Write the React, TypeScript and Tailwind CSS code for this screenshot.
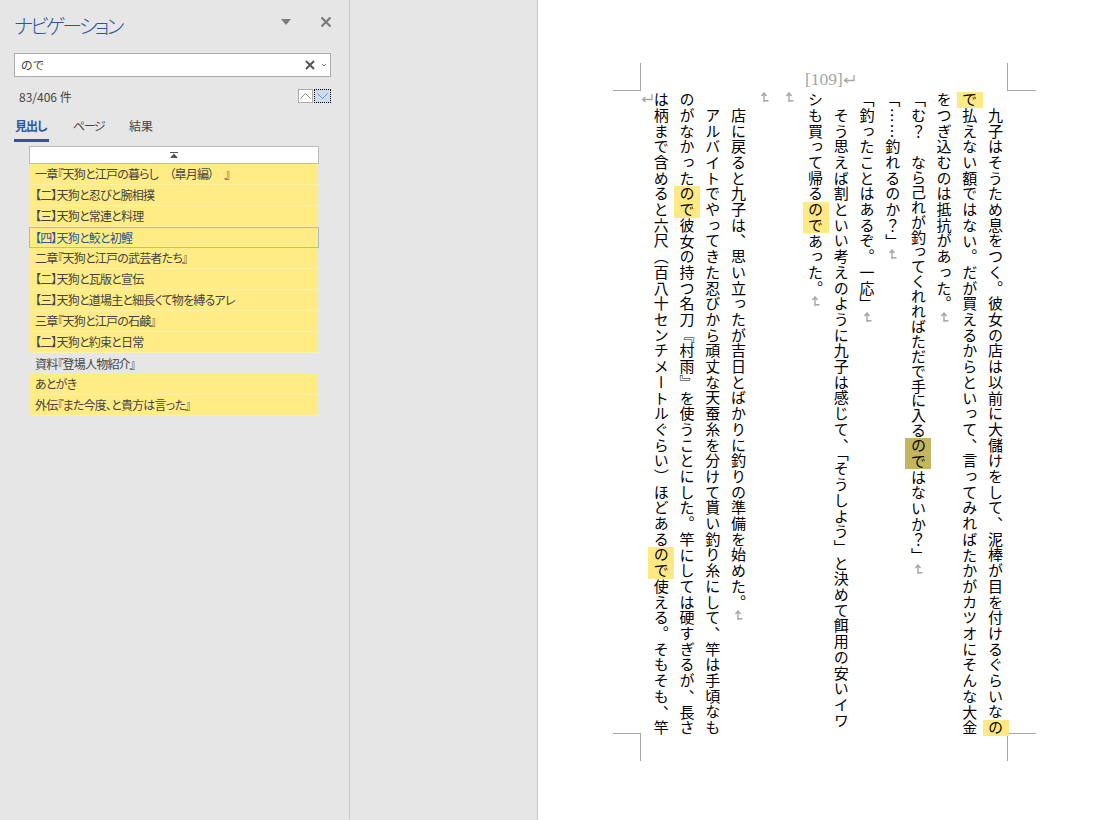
const headings = [
  { text: "一章『天狗と江戸の暮らし\u2003\uFF08皐月編\uFF09\u2003』", hit: true },
  { text: "【二】天狗と忍びと腕相撲", hit: true },
  { text: "【三】天狗と常連と料理", hit: true },
  { text: "【四】天狗と鮫と初鰹", hit: true, current: true },
  { text: "二章『天狗と江戸の武芸者たち』", hit: true },
  { text: "【二】天狗と瓦版と宣伝", hit: true },
  { text: "【三】天狗と道場主と細長くて物を縛るアレ", hit: true },
  { text: "三章『天狗と江戸の石鹸』", hit: true },
  { text: "【二】天狗と約束と日常", hit: true },
  { text: "資料『登場人物紹介』", hit: false },
  { text: "あとがき", hit: true },
  { text: "外伝『また今度、と貴方は言った』", hit: true },
];

// py is padding-block, so in vertical text it widens the mark across the column
function Hit({ children, current }: { children: string; current?: boolean }) {
  return <span className={current ? "bg-[#c4b660] py-[2.5px]" : "bg-[#ffe985] py-[2.5px]"}>{children}</span>;
}

// paragraph mark as Word draws it in vertical text
function UpMark() {
  return (
    <svg viewBox="0 0 10 10" className="inline-block h-[10px] w-[10px] -translate-x-[3px] align-middle text-[#a6a6a6]">
      <path d="M4 10V1.5M1.5 4L4 1L6.5 4M4 8.8H8.5" fill="none" stroke="currentColor" strokeWidth="1.4" />
    </svg>
  );
}

function ReturnMark() {
  return (
    <svg viewBox="0 0 12 10" className="h-[10px] w-[12px] text-[#a6a6a6]">
      <path d="M11 1V6.5H2M4.5 4L1.5 6.5L4.5 9" fill="none" stroke="currentColor" strokeWidth="1.3" />
    </svg>
  );
}

function Column({ children }: { children: React.ReactNode }) {
  return <p className="whitespace-nowrap">{children}</p>;
}

function Document() {
  return (
    <div className="relative h-[644px] w-[368px] pt-[2px] [writing-mode:vertical-rl] text-[15px] leading-[25.7px] tracking-[0.7px] text-black font-['Noto_Sans_CJK_JP',sans-serif] font-normal">
      <Column>　九子はそうため息をつく。彼女の店は以前に大儲けをして、泥棒が目を付けるぐらいな<Hit>の</Hit></Column>
      <Column><Hit>で</Hit>払えない額ではない。だが買えるからといって、言ってみればたかがカツオにそんな大金</Column>
      <Column>をつぎ込むのは抵抗があった。<UpMark /></Column>
      <Column>「む{"\uFF1F"}　<span className="tracking-[-0.1px]">なら己れが釣ってくれればただで手に入る</span><Hit current>ので</Hit>はないか{"\uFF1F"}」<UpMark /></Column>
      <Column>「……釣れるのか{"\uFF1F"}」<UpMark /></Column>
      <Column>「釣ったことはあるぞ。一応」<UpMark /></Column>
      <Column>　そう思えば割といい考えのように九子は感じて、「そうしよう」と決めて餌用の安いイワ</Column>
      <Column>シも買って帰る<Hit>ので</Hit>あった。<UpMark /></Column>
      <Column><UpMark /></Column>
      <Column><UpMark /></Column>
      <Column>　店に戻ると九子は、思い立ったが吉日とばかりに釣りの準備を始めた。<UpMark /></Column>
      <Column>　アルバイトでやってきた忍びから頑丈な天蚕糸を分けて貰い釣り糸にして、竿は手頃なも</Column>
      <Column>のがなかった<Hit>ので</Hit>彼女の持つ名刀『村雨』を使うことにした。竿にしては硬すぎるが、長さ</Column>
      <Column>は柄まで含めると六尺{"\uFF08"}百八十センチメートルぐらい{"\uFF09"}ほどある<Hit>ので</Hit>使える。そもそも、竿</Column>
      <div className="absolute left-[1px] top-[3px]"><ReturnMark /></div>
    </div>
  );
}

function CropMarks() {
  return (
    <>
      <div className="absolute -left-[27px] -top-[27px] h-[28px] w-[28px] border-b border-r border-[#a6a6a6]" />
      <div className="absolute -right-[28px] -top-[27px] h-[28px] w-[29px] border-b border-l border-[#a6a6a6]" />
      <div className="absolute -left-[27px] bottom-[-27px] h-[28px] w-[28px] border-t border-r border-[#a6a6a6]" />
      <div className="absolute -right-[28px] bottom-[-27px] h-[28px] w-[29px] border-t border-l border-[#a6a6a6]" />
    </>
  );
}

export default function App() {
  return (
    <div className="flex h-[820px] w-[1115px] overflow-hidden bg-[#e6e6e6] font-['Noto_Sans_CJK_JP',sans-serif] text-[#444444]">
      <aside className="h-full w-[350px] shrink-0 border-r border-[#c6c6c6] [font-feature-settings:'palt']">
        <div className="flex h-[53px] items-start justify-between pl-[14px] pr-[17px] pt-[11px]">
          <h1 className="whitespace-nowrap text-[20px] font-light leading-[30px] tracking-[-2.8px] text-[#2b579a]">ナビゲーション</h1>
          <div className="flex items-center gap-[29px] pt-[5px]">
            <svg viewBox="0 0 10 6" className="h-[6px] w-[10px]"><path d="M0 0H10L5 6Z" fill="#7a7a7a" /></svg>
            <svg viewBox="0 0 12 12" className="h-[12px] w-[12px]"><path d="M1.5 1.5L10.5 10.5M10.5 1.5L1.5 10.5" stroke="#7a7a7a" strokeWidth="2.2" /></svg>
          </div>
        </div>

        <div className="ml-[14px] flex h-[24px] w-[317px] items-center border border-[#ababab] bg-white pl-[6px] pr-[3px]">
          <span className="flex-1 text-[12px]">ので</span>
          <svg viewBox="0 0 10 10" className="h-[10px] w-[10px]"><path d="M1 1L9 9M9 1L1 9" stroke="#555555" strokeWidth="2" /></svg>
          <svg viewBox="0 0 6 4" className="ml-[6px] h-[4px] w-[6px]"><path d="M1 1L3 3L5 1" fill="none" stroke="#777777" /></svg>
        </div>

        <div className="flex h-[40px] items-center justify-between pl-[19px] pr-[18px]">
          <span className="text-[12px]">83/406 件</span>
          <div className="-mt-[2px] flex">
            <div className="flex h-[14px] w-[15px] items-center justify-center border border-[#ababab] bg-white">
              <svg viewBox="0 0 11 6" className="h-[6px] w-[11px]"><path d="M0.5 5.5L5.5 0.5L10.5 5.5" fill="none" stroke="#888888" /></svg>
            </div>
            <div className="ml-[1px] flex h-[14px] w-[17px] items-center justify-center border border-dotted border-black bg-[#cfdcef]">
              <svg viewBox="0 0 11 6" className="h-[6px] w-[11px]"><path d="M0.5 0.5L5.5 5.5L10.5 0.5" fill="none" stroke="#6f8fbf" /></svg>
            </div>
          </div>
        </div>

        <div className="flex items-start pl-[14px] text-[12px]">
          <div className="h-[25px] w-[35px] whitespace-nowrap border-b-[3px] border-[#2b579a] pl-[1px] font-bold leading-[18px] tracking-[-1px] text-[#2b579a]">見出し</div>
          <div className="ml-[24px] whitespace-nowrap leading-[18px] tracking-[-1.5px]">ページ</div>
          <div className="ml-[25px] whitespace-nowrap leading-[18px]">結果</div>
        </div>

        <div className="ml-[29px] mt-[4px] w-[290px]">
          <div className="flex h-[18px] items-center justify-center border border-[#bdbdbd] bg-white">
            <svg viewBox="0 0 8 6" className="h-[6px] w-[8px]"><path d="M0 0H8V1H0ZM4 1.5L8 6H0Z" fill="#555555" /></svg>
          </div>
          <ul>
            {headings.map((h) => (
              <li
                key={h.text}
                className={`flex h-[21px] items-center whitespace-pre text-[12px] tracking-[-0.8px] ${h.current ? "border border-[#a9bcc9] bg-[#ffec85] pl-[5px] text-[#2b579a]" : "mx-[1px] pl-[5px]"} ${h.hit && !h.current ? "border-b border-[#fdf0a8] bg-[#ffec85]" : ""}`}
              >
                {h.text}
              </li>
            ))}
          </ul>
        </div>
      </aside>

      <main className="flex-1 pl-[187px]">
        <div className="h-full border-l border-[#c6c6c6] bg-white pl-[102px]">
          <div className="w-[368px] pt-[63px]">
            <div className="flex h-[27px] items-center justify-center pl-[12px] pt-[5px] font-['Liberation_Serif',serif] text-[17.5px] text-[#a6a6a6]">
              [109]<ReturnMark />
            </div>
            <div className="relative">
              <CropMarks />
              <Document />
            </div>
          </div>
        </div>
      </main>
    </div>
  );
}
